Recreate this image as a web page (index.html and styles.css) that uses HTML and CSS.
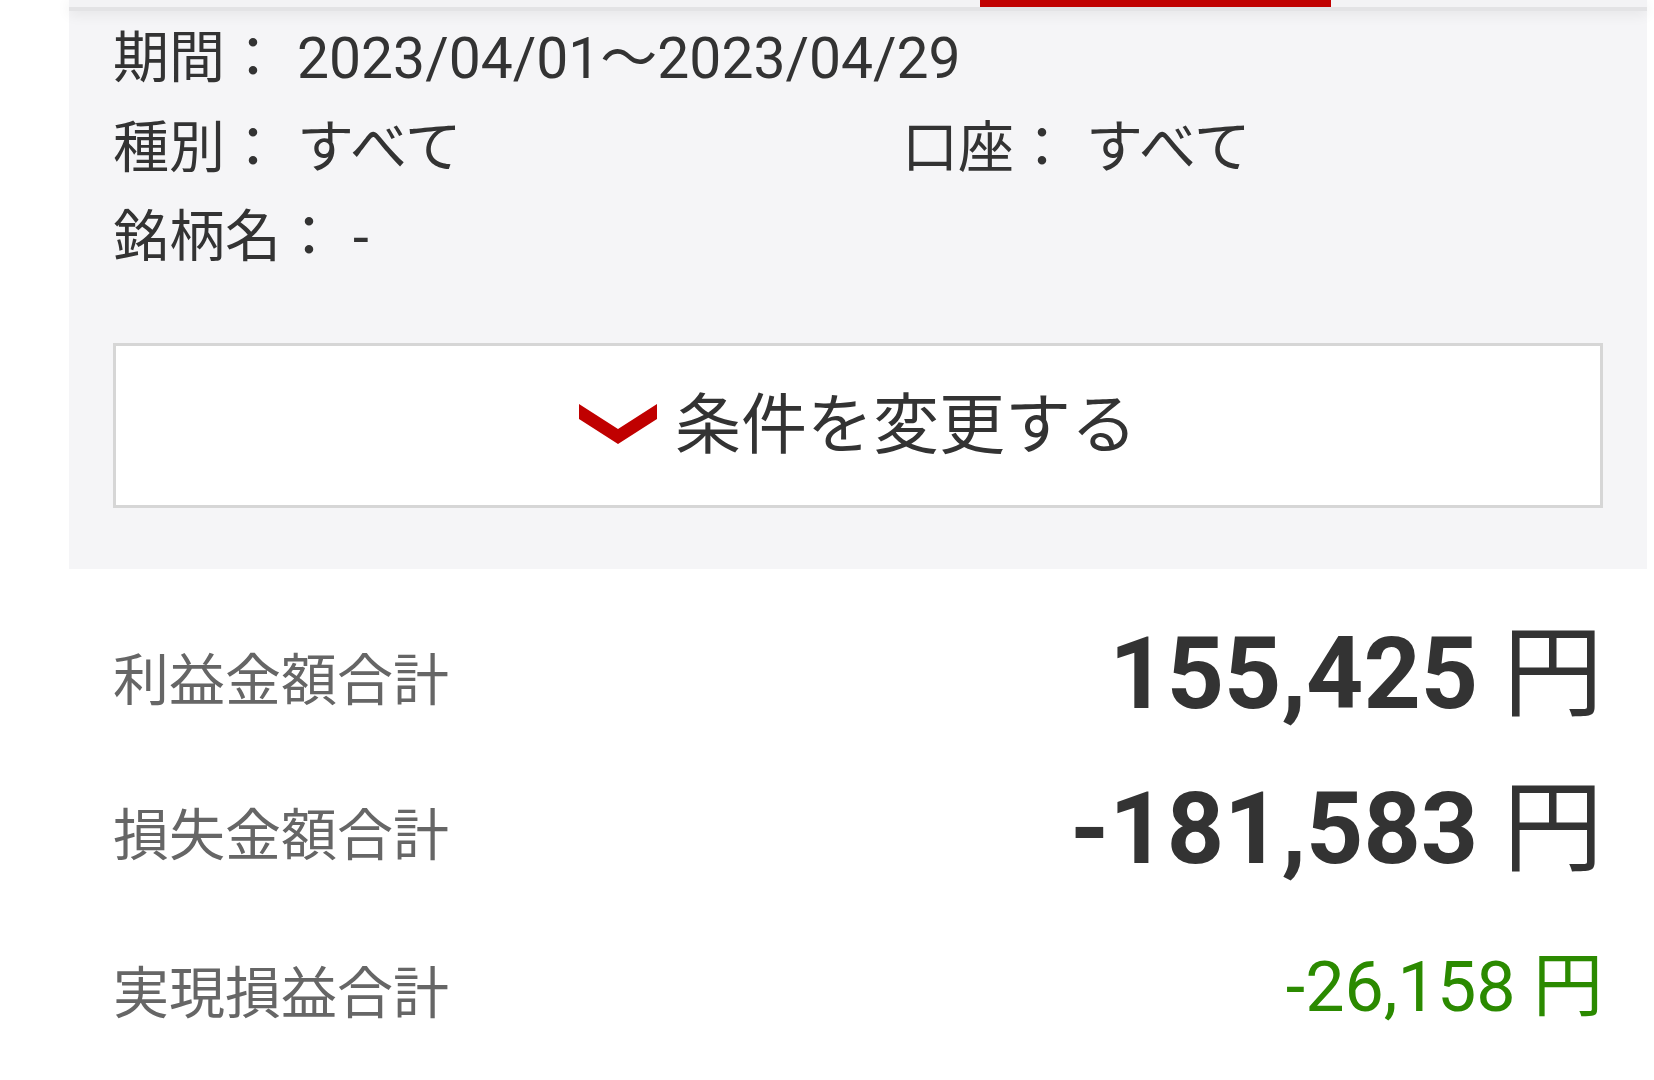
FILE: index.html
```html
<!DOCTYPE html>
<html lang="ja">
<head>
    <meta charset="UTF-8">
    <meta name="viewport" content="width=device-width, initial-scale=1.0">
    <title>実現損益</title>
    <link rel="stylesheet" href="styles.css">
</head>
<body>
    <div class="page">
        <div class="tabs">
            <div class="tab-active"></div>
        </div>

        <div class="conditions">
            <div class="cond-row">
                <span class="key">期間：</span><span class="val">2023/04/01～2023/04/29</span>
            </div>
            <div class="cond-row">
                <div class="cond-col">
                    <span class="key">種別：</span><span class="val">すべて</span>
                </div>
                <div>
                    <span class="key">口座：</span><span class="val">すべて</span>
                </div>
            </div>
            <div class="cond-row">
                <span class="key">銘柄名：</span><span class="val">-</span>
            </div>

            <button class="change-btn" type="button">
                <svg class="chevron" width="78" height="40" viewBox="0 0 78 40">
                    <polygon points="0,0 39,25 78,0 78,15 39,40 0,15" fill="#c00000"/>
                </svg>
                <span>条件を変更する</span>
            </button>
        </div>

        <div class="summary">
            <div class="sum-row">
                <span class="sum-label">利益金額合計</span>
                <span class="sum-value">155,425 <span class="yen">円</span></span>
            </div>
            <div class="sum-row">
                <span class="sum-label">損失金額合計</span>
                <span class="sum-value">-181,583 <span class="yen">円</span></span>
            </div>
            <div class="sum-row total">
                <span class="sum-label">実現損益合計</span>
                <span class="sum-value">-26,158 <span class="yen">円</span></span>
            </div>
        </div>
    </div>
</body>
</html>
```

FILE: styles.css
```css
body {
    margin: 0;
    background-color: #ffffff;
    font-family: Roboto, "Noto Sans CJK JP", sans-serif;
    color: #333333;
}
.page {
    padding: 0 7px 0 69px;
}
.tabs {
    position: relative;
    z-index: 1;
    display: flex;
    height: 7px;
    background-color: #f3f3f5;
    border-bottom: 4px solid #e3e3e5;
    box-shadow: 0 3px 14px rgba(0, 0, 0, 0.08);
}
.tab-active {
    margin-left: 911px;
    width: 351px;
    height: 7px;
    background-color: #c00000;
}
.conditions {
    background-color: #f5f5f7;
    padding: 3px 44px 61px;
}
.cond-row {
    display: flex;
    font-size: 56px;
    line-height: 89px;
    color: #333333;
}
.cond-col {
    width: 789px;
}
.val {
    margin-left: 16px;
    font-size: 57px;
}
.change-btn {
    display: flex;
    align-items: center;
    justify-content: center;
    gap: 18px;
    width: 100%;
    height: 165px;
    margin-top: 61px;
    padding: 0 0 14px;
    background-color: #ffffff;
    border: 3px solid #d6d6d6;
    font-family: Roboto, "Noto Sans CJK JP", sans-serif;
    font-size: 66px;
    color: #333333;
    cursor: pointer;
}
.chevron {
    flex-shrink: 0;
    margin-top: 10px;
}
.summary {
    padding: 27px 44px 0;
}
.sum-row {
    display: flex;
    justify-content: space-between;
    align-items: center;
    line-height: 155px;
}
.sum-label {
    padding-top: 14px;
    font-size: 56px;
    line-height: 56px;
    color: #666666;
}
.sum-value {
    font-size: 100px;
    font-weight: 700;
    color: #333333;
}
.yen {
    font-weight: 400;
}
.total {
    line-height: 162px;
}
.total .sum-value {
    font-size: 70px;
    font-weight: 400;
    color: #2b8a00;
}
```
